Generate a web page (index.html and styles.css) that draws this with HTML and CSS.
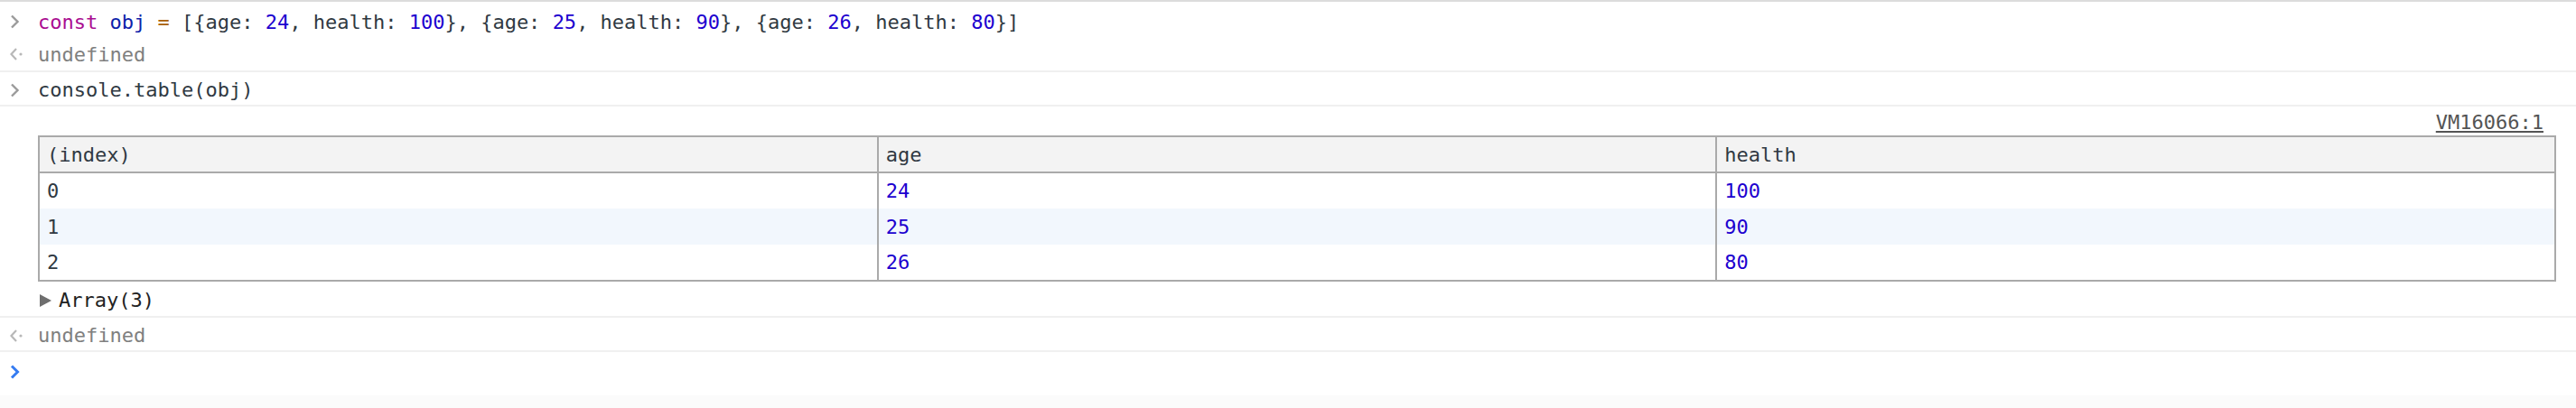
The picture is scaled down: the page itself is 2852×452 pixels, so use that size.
FILE: index.html
```html
<!DOCTYPE html>
<html>
<head>
<meta charset="utf-8">
<link rel="stylesheet" href="styles.css">
</head>
<body>
<div class="console">
  <div class="msg">
    <div class="line first">
      <span class="gutter"><svg width="12" height="16" viewBox="0 0 12 16"><polyline points="2,1.5 8.5,8 2,14.5" fill="none" stroke="#9a9a9a" stroke-width="2.4"/></svg></span>
      <span class="code"><span class="kw">const</span> <span class="def">obj</span> <span class="op">=</span> [{age: <span class="num">24</span>, health: <span class="num">100</span>}, {age: <span class="num">25</span>, health: <span class="num">90</span>}, {age: <span class="num">26</span>, health: <span class="num">80</span>}]</span>
    </div>
    <div class="line result">
      <span class="gutter"><svg width="16" height="16" viewBox="0 0 16 16"><polyline points="7,2 1.5,8 7,14" fill="none" stroke="#b8b8b8" stroke-width="2.2"/><circle cx="12" cy="8" r="1.6" fill="#b8b8b8"/></svg></span>
      <span class="undef">undefined</span>
    </div>
  </div>
  <div class="msg">
    <div class="line shifted">
      <span class="gutter"><svg width="12" height="16" viewBox="0 0 12 16"><polyline points="2,1.5 8.5,8 2,14.5" fill="none" stroke="#9a9a9a" stroke-width="2.4"/></svg></span>
      <span class="code">console.table(obj)</span>
    </div>
  </div>
  <div class="msg log">
    <div class="source-row"><a class="source">VM16066:1</a></div>
    <table class="grid">
      <thead>
        <tr><th>(index)</th><th>age</th><th>health</th></tr>
      </thead>
      <tbody>
        <tr><td>0</td><td class="num">24</td><td class="num">100</td></tr>
        <tr class="stripe"><td>1</td><td class="num">25</td><td class="num">90</td></tr>
        <tr><td>2</td><td class="num">26</td><td class="num">80</td></tr>
      </tbody>
    </table>
    <div class="tree"><span class="triangle"></span><span class="tree-label">Array(3)</span></div>
  </div>
  <div class="msg">
    <div class="line shifted">
      <span class="gutter"><svg width="16" height="16" viewBox="0 0 16 16"><polyline points="7,2 1.5,8 7,14" fill="none" stroke="#b8b8b8" stroke-width="2.2"/><circle cx="12" cy="8" r="1.6" fill="#b8b8b8"/></svg></span>
      <span class="undef">undefined</span>
    </div>
  </div>
  <div class="prompt">
    <span class="gutter"><svg width="12" height="16" viewBox="0 0 12 16"><polyline points="2,1.5 8.5,8 2,14.5" fill="none" stroke="#367cf1" stroke-width="3"/></svg></span>
  </div>
  <div class="spacer"></div>
  <div class="footer"></div>
</div>
</body>
</html>
```

FILE: styles.css
```css
* { box-sizing: border-box; }
html, body {
  margin: 0;
  padding: 0;
  background: #ffffff;
}
body {
  width: 2852px;
  height: 452px;
  overflow: hidden;
  font-family: "DejaVu Sans Mono", "Liberation Mono", monospace;
  font-size: 22px;
  color: #303942;
}
.console {
  display: flex;
  flex-direction: column;
  height: 452px;
  border-top: 2px solid #dcdcdc;
}
.msg {
  border-bottom: 2px solid #f0f0f0;
  display: flex;
  flex-direction: column;
}
.line {
  display: flex;
  align-items: center;
  height: 36px;
  white-space: pre;
}
.line.shifted {
  padding-top: 3px;
}
.line.first {
  height: 40px;
  padding-top: 4px;
}
.line.result {
  height: 36px;
}
.gutter {
  width: 42px;
  flex: none;
  display: flex;
  align-items: center;
  padding-left: 11px;
}
.gutter svg { display: block; }
.code { color: #303942; }
.kw { color: #aa0d91; }
.def { color: #0d22aa; }
.op { color: #a85d00; }
.num { color: #1c00cf; }
.undef { color: #808080; }

.log {
  padding: 0 22px 0 42px;
}
.source-row {
  display: flex;
  justify-content: flex-end;
  height: 32px;
  align-items: center;
  padding-top: 3px;
  padding-right: 14px;
}
.source {
  color: #545454;
  text-decoration: underline;
  line-height: 26px;
}
.grid {
  width: 100%;
  table-layout: fixed;
  border-collapse: collapse;
  border: 2px solid #aaaaaa;
}
.grid th, .grid td {
  border-left: 2px solid #aaaaaa;
  height: 40px;
  padding: 0 8px;
  text-align: left;
  font-weight: normal;
  white-space: nowrap;
  vertical-align: middle;
}
.grid th {
  background: #f3f3f3;
  border-bottom: 2px solid #aaaaaa;
  color: #303942;
}
.grid td { color: #303942; }
.grid td.num { color: #1c00cf; }
.grid tr.stripe td { background: #f2f7fd; }
.tree {
  display: flex;
  align-items: center;
  height: 38px;
  padding-top: 2px;
}
.triangle {
  width: 0;
  height: 0;
  border-top: 7px solid transparent;
  border-bottom: 7px solid transparent;
  border-left: 13px solid #6e6e6e;
  margin: 2px 8px 0 2px;
}
.tree-label { color: #222222; }
.prompt {
  display: flex;
  align-items: center;
  height: 42px;
  padding-top: 2px;
}
.spacer { flex: 1; }
.footer {
  height: 14px;
  background: #fbfbfb;
}
```
